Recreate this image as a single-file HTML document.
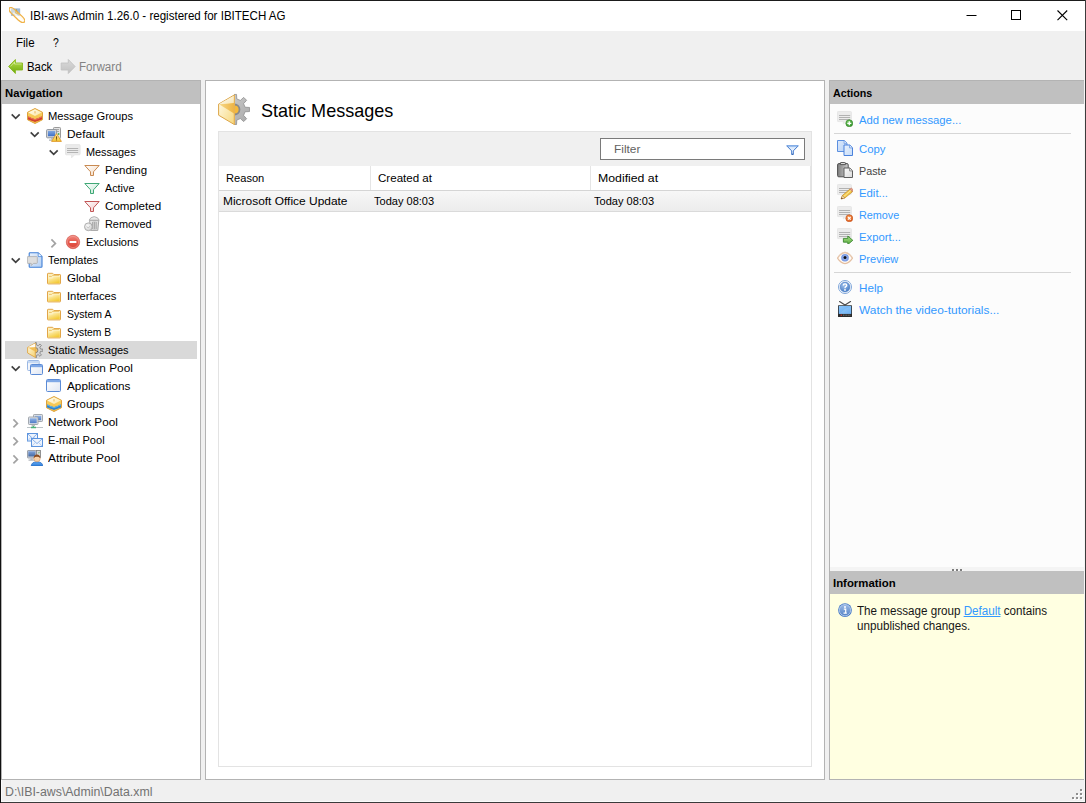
<!DOCTYPE html>
<html><head><meta charset="utf-8"><title>IBI-aws Admin</title>
<style>
html,body{margin:0;padding:0;background:#f0f0f0;}
body{width:1086px;height:803px;position:relative;overflow:hidden;font-family:"Liberation Sans",sans-serif;font-size:12px;}
.b{position:absolute;display:block;}
.t{position:absolute;white-space:pre;transform-origin:0 0;line-height:normal;}
</style></head><body>
<div class="b" style="left:0px;top:0px;width:1086px;height:803px;background:#f0f0f0;"></div>
<div class="b" style="left:0px;top:0px;width:1086px;height:1px;background:#1b1b1b;"></div>
<div class="b" style="left:0px;top:802px;width:1086px;height:1px;background:#3a3a3a;"></div>
<div class="b" style="left:0px;top:0px;width:1px;height:803px;background:#111;"></div>
<div class="b" style="left:1085px;top:0px;width:1px;height:803px;background:#3c3c3c;"></div>
<div class="b" style="left:1084px;top:1px;width:1px;height:801px;background:#f6f6f6;"></div>
<div class="b" style="left:1px;top:31px;width:1px;height:771px;background:#fafafa;"></div>
<div class="b" style="left:1px;top:801px;width:1084px;height:1px;background:#fafafa;"></div>
<div class="b" style="left:1px;top:1px;width:1084px;height:30px;background:#fff;"></div>
<svg class="b" style="left:960px;top:5px" width="120" height="22" viewBox="0 0 120 22"><path d="M6.5 10.5h10" stroke="#000" stroke-width="1" fill="none"/><rect x="51.5" y="5.5" width="9" height="9" fill="none" stroke="#000"/><path d="M97.5 5.5l9.7 9.7M107.2 5.5l-9.7 9.7" stroke="#000" stroke-width="1.1" fill="none"/></svg>
<div class="b" style="left:1px;top:80px;width:200px;height:700px;background:#fff;border:1px solid #b3b3b3;box-sizing:border-box;"></div>
<div class="b" style="left:2px;top:81px;width:198px;height:23px;background:#c0c0c0;"></div>
<div class="b" style="left:5px;top:341px;width:192px;height:18px;background:#d9d9d9;"></div>
<svg class="b" style="left:27px;top:108px" width="16" height="16" viewBox="0 0 16 16"><defs><linearGradient id="g1" x1="0" y1="0" x2="1" y2="1"><stop offset="0" stop-color="#fffef6"/><stop offset="1" stop-color="#fbe6a0"/></linearGradient><linearGradient id="g2" x1="0" y1="0" x2="0" y2="1"><stop offset="0" stop-color="#f9d56a"/><stop offset="1" stop-color="#f3bd45"/></linearGradient></defs><path d="M8 .5L15.5 4.3V11.7L8 15.5L.5 11.7V4.3Z" fill="url(#g2)" stroke="#dda13c" stroke-width="1" stroke-linejoin="round"/><path d="M8 1.2L14.8 4.5L8 8L1.2 4.5Z" fill="url(#g1)"/><path d="M1 8.6L2.8 9L4.4 10L6.2 10.4L8 11.2L9.8 10.4L11.6 10L13.2 9L15 8.6V11.5L13.2 11.9L11.6 12.8L9.8 13.2L8 14L6.2 13.2L4.4 12.8L2.8 11.9L1 11.5Z" fill="#d2402c"/><path d="M1 8.6L2.8 9L4.4 10L6.2 10.4L8 11.2L9.8 10.4L11.6 10L13.2 9L15 8.6V9.6L13.2 10.1L11.6 11L9.8 11.5L8 12.3L6.2 11.5L4.4 11L2.8 10.1L1 9.6Z" fill="#e8705a"/><path d="M8 3.2v2.2" stroke="#e9b04a" stroke-width=".9"/></svg>
<svg class="b" style="left:10px;top:111px" width="11" height="11" viewBox="0 0 11 11"><path d="M1.7 3.3l4 4l4-4" fill="none" stroke="#404040" stroke-width="1.7"/></svg>
<svg class="b" style="left:46px;top:126px" width="16" height="16" viewBox="0 0 16 16"><defs><linearGradient id="g3" x1="0" y1="0" x2="0" y2="1"><stop offset="0" stop-color="#7ea6e0"/><stop offset="1" stop-color="#3f6fc4"/></linearGradient><linearGradient id="g4" x1="0" y1="0" x2="0" y2="1"><stop offset="0" stop-color="#fff4a8"/><stop offset="1" stop-color="#f6c52e"/></linearGradient></defs><rect x="7.5" y="1.5" width="7" height="11" rx=".8" fill="#e4e4e4" stroke="#9a9a9a"/><path d="M9 3.5h4M9 5.5h4" stroke="#a8a8a8"/><circle cx="12.6" cy="8" r=".9" fill="#4caf50"/><rect x=".6" y="3.6" width="10" height="8.2" rx=".8" fill="#d6d9de" stroke="#8e949c"/><rect x="2" y="5" width="7.2" height="5.2" fill="url(#g3)"/><path d="M3 13.6h6.5v1H3z" fill="#9aa0a8"/><path d="M5 12h2.4v1.6H5z" fill="#b8bcc2"/><path d="M10.5 7.6L15.4 15.4H5.6Z" fill="url(#g4)" stroke="#e09a2e" stroke-width=".9" stroke-linejoin="round"/><path d="M10.5 10.3v2.6" stroke="#7a4a10" stroke-width="1.1"/><rect x="9.95" y="13.4" width="1.1" height="1" fill="#7a4a10"/></svg>
<svg class="b" style="left:29px;top:129px" width="11" height="11" viewBox="0 0 11 11"><path d="M1.7 3.3l4 4l4-4" fill="none" stroke="#404040" stroke-width="1.7"/></svg>
<svg class="b" style="left:65px;top:144px" width="16" height="16" viewBox="0 0 16 16"><path d="M1.3 .6h13a.8.8 0 0 1 .8.8v8.6a.8.8 0 0 1-.8.8H9.6L6.6 13.8V10.8H1.3a.8.8 0 0 1-.8-.8V1.4a.8.8 0 0 1 .8-.8z" fill="#ebebeb" stroke="#e2e2e2" stroke-width=".8"/><path d="M2 4.5h11.2M2 6.5h11.2M2 8.5h11.2" stroke="#b4b4b4" stroke-width="1"/></svg>
<svg class="b" style="left:48px;top:147px" width="11" height="11" viewBox="0 0 11 11"><path d="M1.7 3.3l4 4l4-4" fill="none" stroke="#404040" stroke-width="1.7"/></svg>
<svg class="b" style="left:84px;top:162px" width="16" height="16" viewBox="0 0 16 16"><defs><linearGradient id="g5" x1="0" y1="0" x2="1" y2="1"><stop offset="0" stop-color="#ffffff"/><stop offset="1" stop-color="#f3d9c0"/></linearGradient></defs><path d="M.8 3.5H15.2L9.5 9.8V13.5H6.5V9.8Z" fill="url(#g5)" stroke="#c98a52" stroke-width="1" stroke-linejoin="miter"/></svg>
<svg class="b" style="left:84px;top:180px" width="16" height="16" viewBox="0 0 16 16"><defs><linearGradient id="g6" x1="0" y1="0" x2="1" y2="1"><stop offset="0" stop-color="#ffffff"/><stop offset="1" stop-color="#bfe6d2"/></linearGradient></defs><path d="M.8 3.5H15.2L9.5 9.8V13.5H6.5V9.8Z" fill="url(#g6)" stroke="#3fa876" stroke-width="1" stroke-linejoin="miter"/></svg>
<svg class="b" style="left:84px;top:198px" width="16" height="16" viewBox="0 0 16 16"><defs><linearGradient id="g7" x1="0" y1="0" x2="1" y2="1"><stop offset="0" stop-color="#ffffff"/><stop offset="1" stop-color="#f0c4c4"/></linearGradient></defs><path d="M.8 3.5H15.2L9.5 9.8V13.5H6.5V9.8Z" fill="url(#g7)" stroke="#c25656" stroke-width="1" stroke-linejoin="miter"/></svg>
<svg class="b" style="left:84px;top:216px" width="16" height="16" viewBox="0 0 16 16"><defs><linearGradient id="g8" x1="0" y1="0" x2="1" y2="0"><stop offset="0" stop-color="#f2f2f2"/><stop offset="0.5" stop-color="#cfcfcf"/><stop offset="1" stop-color="#e6e6e6"/></linearGradient><radialGradient id="g9" cx="0.4" cy="0.4" r="0.7"><stop offset="0" stop-color="#fafafa"/><stop offset="1" stop-color="#cdcdcd"/></radialGradient></defs><path d="M5.6 4.3L6.6 14.4h7.2l1-10.1z" fill="url(#g8)" stroke="#9c9c9c" stroke-width=".9"/><path d="M5.2 4.2Q6 1.2 10.2.6Q14.4 1.2 15.2 4.2z" fill="#e8e8e8" stroke="#a6a6a6" stroke-width=".8"/><path d="M8.6 6v7M10.4 6v7M12.2 6v7" stroke="#a2a2a2" stroke-width=".9"/><circle cx="4.4" cy="10.8" r="3.9" fill="url(#g9)" stroke="#a8a8a8" stroke-width=".9"/><path d="M2.6 10.6l1.6 1.2l1.8-1.4" fill="none" stroke="#b5b5b5" stroke-width=".8"/></svg>
<svg class="b" style="left:65px;top:234px" width="16" height="16" viewBox="0 0 16 16"><defs><linearGradient id="g10" x1="0" y1="0" x2="0" y2="1"><stop offset="0" stop-color="#f28b82"/><stop offset="0.5" stop-color="#e4564a"/><stop offset="1" stop-color="#dc4336"/></linearGradient></defs><circle cx="8" cy="8" r="6.7" fill="url(#g10)" stroke="#d96a60" stroke-width=".8"/><circle cx="8" cy="8" r="5.6" fill="none" stroke="#f3a49c" stroke-width=".7" opacity=".8"/><rect x="4.6" y="6.9" width="6.8" height="2.2" rx=".4" fill="#fff"/></svg>
<svg class="b" style="left:48px;top:238px" width="11" height="11" viewBox="0 0 11 11"><path d="M3.4 1.4l4 4l-4 4" fill="none" stroke="#a3a3a3" stroke-width="1.7"/></svg>
<svg class="b" style="left:27px;top:252px" width="16" height="16" viewBox="0 0 16 16"><defs><linearGradient id="g11" x1="0" y1="0" x2="1" y2="1"><stop offset="0" stop-color="#e8f1fd"/><stop offset="1" stop-color="#b5d0f3"/></linearGradient></defs><path d="M3 .8h8.2L15 4.6V14.4a.8.8 0 0 1-.8.8H3a.8.8 0 0 1-.8-.8V1.6A.8.8 0 0 1 3 .8z" fill="url(#g11)" stroke="#3f7fd6" stroke-width="1.1"/><path d="M11.2 1v3.6H15" fill="#f4f8fe" stroke="#4a86d8" stroke-width=".8"/><path d="M1 4.6h8.6a.7.7 0 0 1 .7.7v5.4a.7.7 0 0 1-.7.7H6.4L4.2 13.6V11.4H1a.7.7 0 0 1-.7-.7V5.3A.7.7 0 0 1 1 4.6z" fill="#dedede" stroke="#ababab" stroke-width=".8"/></svg>
<svg class="b" style="left:10px;top:255px" width="11" height="11" viewBox="0 0 11 11"><path d="M1.7 3.3l4 4l4-4" fill="none" stroke="#404040" stroke-width="1.7"/></svg>
<svg class="b" style="left:46px;top:270px" width="16" height="16" viewBox="0 0 16 16"><defs><linearGradient id="g12" x1="0" y1="0" x2="0.6" y2="1"><stop offset="0" stop-color="#fff6cf"/><stop offset="1" stop-color="#f4cb3a"/></linearGradient></defs><path d="M1.5 3.9a.6.6 0 0 1 .6-.6h4.6l1.2 1.2h6a.6.6 0 0 1 .6.6v8.2a.6.6 0 0 1-.6.6H2.1a.6.6 0 0 1-.6-.6z" fill="#fdf0bf" stroke="#e2a548" stroke-width="1"/><path d="M2.2 8.4h4.2l1.4-1.7h6v6.5H2.2z" fill="url(#g12)"/><path d="M3 6.4h2.6l1-1h6.6" fill="none" stroke="#ecc468" stroke-width="1"/></svg>
<svg class="b" style="left:46px;top:288px" width="16" height="16" viewBox="0 0 16 16"><defs><linearGradient id="g13" x1="0" y1="0" x2="0.6" y2="1"><stop offset="0" stop-color="#fff6cf"/><stop offset="1" stop-color="#f4cb3a"/></linearGradient></defs><path d="M1.5 3.9a.6.6 0 0 1 .6-.6h4.6l1.2 1.2h6a.6.6 0 0 1 .6.6v8.2a.6.6 0 0 1-.6.6H2.1a.6.6 0 0 1-.6-.6z" fill="#fdf0bf" stroke="#e2a548" stroke-width="1"/><path d="M2.2 8.4h4.2l1.4-1.7h6v6.5H2.2z" fill="url(#g13)"/><path d="M3 6.4h2.6l1-1h6.6" fill="none" stroke="#ecc468" stroke-width="1"/></svg>
<svg class="b" style="left:46px;top:306px" width="16" height="16" viewBox="0 0 16 16"><defs><linearGradient id="g14" x1="0" y1="0" x2="0.6" y2="1"><stop offset="0" stop-color="#fff6cf"/><stop offset="1" stop-color="#f4cb3a"/></linearGradient></defs><path d="M1.5 3.9a.6.6 0 0 1 .6-.6h4.6l1.2 1.2h6a.6.6 0 0 1 .6.6v8.2a.6.6 0 0 1-.6.6H2.1a.6.6 0 0 1-.6-.6z" fill="#fdf0bf" stroke="#e2a548" stroke-width="1"/><path d="M2.2 8.4h4.2l1.4-1.7h6v6.5H2.2z" fill="url(#g14)"/><path d="M3 6.4h2.6l1-1h6.6" fill="none" stroke="#ecc468" stroke-width="1"/></svg>
<svg class="b" style="left:46px;top:324px" width="16" height="16" viewBox="0 0 16 16"><defs><linearGradient id="g15" x1="0" y1="0" x2="0.6" y2="1"><stop offset="0" stop-color="#fff6cf"/><stop offset="1" stop-color="#f4cb3a"/></linearGradient></defs><path d="M1.5 3.9a.6.6 0 0 1 .6-.6h4.6l1.2 1.2h6a.6.6 0 0 1 .6.6v8.2a.6.6 0 0 1-.6.6H2.1a.6.6 0 0 1-.6-.6z" fill="#fdf0bf" stroke="#e2a548" stroke-width="1"/><path d="M2.2 8.4h4.2l1.4-1.7h6v6.5H2.2z" fill="url(#g15)"/><path d="M3 6.4h2.6l1-1h6.6" fill="none" stroke="#ecc468" stroke-width="1"/></svg>
<svg class="b" style="left:27px;top:342px" width="16" height="16" viewBox="0 0 16 16"><defs><linearGradient id="g16" x1="0" y1="0" x2="1" y2="1"><stop offset="0" stop-color="#fff8e0"/><stop offset="1" stop-color="#f6d372"/></linearGradient><clipPath id="cg16"><rect x="8" y="0" width="8" height="16"/></clipPath></defs><g clip-path="url(#cg16)"><path d="M13.58 7.07L15.93 7.16L15.93 9.24L13.58 9.33L12.83 11.13L14.43 12.86L12.96 14.33L11.23 12.73L9.43 13.48L9.34 15.83L7.26 15.83L7.17 13.48L5.37 12.73L3.64 14.33L2.17 12.86L3.77 11.13L3.02 9.33L0.67 9.24L0.67 7.16L3.02 7.07L3.77 5.27L2.17 3.54L3.64 2.07L5.37 3.67L7.17 2.92L7.26 0.57L9.34 0.57L9.43 2.92L11.23 3.67L12.96 2.07L14.43 3.54L12.83 5.27Z" fill="#d2d2d2" stroke="#7c7c7c" stroke-width=".8"/><circle cx="8.3" cy="8.2" r="2.6" fill="#f0c060" stroke="#7f7f7f" stroke-width=".9"/></g><path d="M.6 5.4L8.3 1V15.4L.6 11Z" fill="url(#g16)" stroke="#dfa645" stroke-width=".9" stroke-linejoin="round"/><path d="M.9 5.5L8.1 5.2V9.6Z" fill="#f2be55"/><path d="M.9 5.3L8.1 1.4V5Z" fill="#fffaf0"/></svg>
<svg class="b" style="left:27px;top:360px" width="16" height="16" viewBox="0 0 16 16"><defs><linearGradient id="g17" x1="0" y1="0" x2="1" y2="1"><stop offset="0" stop-color="#ffffff"/><stop offset="1" stop-color="#dfe6f3"/></linearGradient></defs><rect x="0.5" y="0.5" width="11.6" height="10" rx="1" fill="url(#g17)" stroke="#9bb8e4"/><rect x="1" y="1" width="10.6" height="2.2" fill="#c6d9f3"/><defs><linearGradient id="g18" x1="0" y1="0" x2="1" y2="1"><stop offset="0" stop-color="#ffffff"/><stop offset="1" stop-color="#dfe6f3"/></linearGradient></defs><rect x="3.5" y="4.5" width="12" height="10" rx="1" fill="url(#g18)" stroke="#5b8bd6"/><rect x="4" y="5" width="11" height="2.2" fill="#7fa8e6"/></svg>
<svg class="b" style="left:10px;top:363px" width="11" height="11" viewBox="0 0 11 11"><path d="M1.7 3.3l4 4l4-4" fill="none" stroke="#404040" stroke-width="1.7"/></svg>
<svg class="b" style="left:46px;top:378px" width="16" height="16" viewBox="0 0 16 16"><defs><linearGradient id="g19" x1="0" y1="0" x2="1" y2="1"><stop offset="0" stop-color="#ffffff"/><stop offset="1" stop-color="#dfe6f3"/></linearGradient></defs><rect x="0.5" y="1.5" width="14" height="12" rx="1" fill="url(#g19)" stroke="#5b8bd6"/><rect x="1" y="2" width="13" height="2.2" fill="#7fa8e6"/></svg>
<svg class="b" style="left:46px;top:396px" width="16" height="16" viewBox="0 0 16 16"><defs><linearGradient id="g20" x1="0" y1="0" x2="1" y2="1"><stop offset="0" stop-color="#fffef6"/><stop offset="1" stop-color="#fbe6a0"/></linearGradient><linearGradient id="g21" x1="0" y1="0" x2="0" y2="1"><stop offset="0" stop-color="#f9d56a"/><stop offset="1" stop-color="#f3bd45"/></linearGradient></defs><path d="M8 .5L15.5 4.3V11.7L8 15.5L.5 11.7V4.3Z" fill="url(#g21)" stroke="#dda13c" stroke-width="1" stroke-linejoin="round"/><path d="M8 1.2L14.8 4.5L8 8L1.2 4.5Z" fill="url(#g20)"/><path d="M1 8.6L2.8 9L4.4 10L6.2 10.4L8 11.2L9.8 10.4L11.6 10L13.2 9L15 8.6V11.5L13.2 11.9L11.6 12.8L9.8 13.2L8 14L6.2 13.2L4.4 12.8L2.8 11.9L1 11.5Z" fill="#2f86cf"/><path d="M1 8.6L2.8 9L4.4 10L6.2 10.4L8 11.2L9.8 10.4L11.6 10L13.2 9L15 8.6V9.6L13.2 10.1L11.6 11L9.8 11.5L8 12.3L6.2 11.5L4.4 11L2.8 10.1L1 9.6Z" fill="#63b3ea"/><path d="M8 3.2v2.2" stroke="#e9b04a" stroke-width=".9"/></svg>
<svg class="b" style="left:27px;top:414px" width="16" height="16" viewBox="0 0 16 16"><defs><linearGradient id="g22" x1="0" y1="0" x2="0" y2="1"><stop offset="0" stop-color="#8fb2e6"/><stop offset="1" stop-color="#4f7cc6"/></linearGradient></defs><rect x="6.5" y="0.5" width="9" height="7" rx=".7" fill="#e3e5e8" stroke="#9aa0a8" stroke-width=".9"/><rect x="7.8" y="1.8" width="6.4" height="4.4" fill="url(#g22)"/><rect x="1.5" y="3.0" width="9.5" height="7.5" rx=".7" fill="#e3e5e8" stroke="#9aa0a8" stroke-width=".9"/><rect x="2.8" y="4.3" width="6.9" height="4.9" fill="url(#g22)"/><path d="M4.6 11h3.4v1.2H4.6z" fill="#b9bdc3"/><path d="M0 13.5h16" stroke="#bcc4c8" stroke-width="1"/><path d="M6.3 12v1.5M4 13.5h5" stroke="#4bb37a" stroke-width="1.3"/></svg>
<svg class="b" style="left:10px;top:418px" width="11" height="11" viewBox="0 0 11 11"><path d="M3.4 1.4l4 4l-4 4" fill="none" stroke="#a3a3a3" stroke-width="1.7"/></svg>
<svg class="b" style="left:27px;top:432px" width="16" height="16" viewBox="0 0 16 16"><rect x="0.5" y="1.5" width="10" height="7.5" fill="#eef4fd" stroke="#5d94de" stroke-width="1"/><path d="M1 2L5.5 6.27L10 2" fill="none" stroke="#7aa8e6" stroke-width=".9"/><path d="M1 8.5L3.96 5.25M10 8.5L7.04 5.25" fill="none" stroke="#a9c6ef" stroke-width=".8"/><rect x="4.5" y="6.5" width="11" height="8" fill="#eef4fd" stroke="#5d94de" stroke-width="1"/><path d="M5 7L10.0 11.58L15 7" fill="none" stroke="#7aa8e6" stroke-width=".9"/><path d="M5 14L8.32 10.5M15 14L11.68 10.5" fill="none" stroke="#a9c6ef" stroke-width=".8"/></svg>
<svg class="b" style="left:10px;top:436px" width="11" height="11" viewBox="0 0 11 11"><path d="M3.4 1.4l4 4l-4 4" fill="none" stroke="#a3a3a3" stroke-width="1.7"/></svg>
<svg class="b" style="left:27px;top:450px" width="16" height="16" viewBox="0 0 16 16"><defs><linearGradient id="g23" x1="0" y1="0" x2="0" y2="1"><stop offset="0" stop-color="#7ea2dc"/><stop offset="1" stop-color="#44689f"/></linearGradient><linearGradient id="g24" x1="0" y1="0" x2="0" y2="1"><stop offset="0" stop-color="#62a8f2"/><stop offset="1" stop-color="#2f7fd9"/></linearGradient></defs><rect x="9.5" y=".5" width="4" height="7" fill="#d8d8d8" stroke="#7d7d7d" stroke-width=".8"/><rect x=".5" y=".5" width="8.5" height="7.5" rx=".5" fill="#d4d8de" stroke="#8a9099" stroke-width=".8"/><rect x="1.3" y="1.3" width="7" height="5.2" fill="url(#g23)"/><path d="M1.5 9.6h6v1.2h-6zM3.4 8.2h2.4v1.4H3.4z" fill="#b4b8be"/><path d="M11 3.2l1.4-1.6v1.6z" fill="#3daa4c"/><path d="M4.2 16Q4.6 11.8 10 11.8Q15.4 11.8 15.8 16z" fill="url(#g24)" stroke="#2a6cc0" stroke-width=".7"/><circle cx="10" cy="8.6" r="3.2" fill="#f8cfa4" stroke="#c98c58" stroke-width=".5"/><path d="M6.7 8.2Q6.9 4.6 10 4.6Q13.1 4.6 13.3 8.2Q11.8 6.6 10 6.8Q8.2 6.6 6.7 8.2z" fill="#8a4b20"/></svg>
<svg class="b" style="left:10px;top:454px" width="11" height="11" viewBox="0 0 11 11"><path d="M3.4 1.4l4 4l-4 4" fill="none" stroke="#a3a3a3" stroke-width="1.7"/></svg>
<div class="b" style="left:205px;top:80px;width:620px;height:700px;background:#fff;border:1px solid #b3b3b3;box-sizing:border-box;"></div>
<div class="b" style="left:218px;top:131px;width:594px;height:636px;background:#fff;border:1px solid #e3e3e3;box-sizing:border-box;"></div>
<div class="b" style="left:219px;top:132px;width:592px;height:34px;background:#f0f0f0;"></div>
<div class="b" style="left:600px;top:138px;width:205px;height:22px;background:#fff;border:1px solid #7a7a7a;box-sizing:border-box;"></div>
<div class="b" style="left:219px;top:166px;width:592px;height:24px;background:#fff;"></div>
<div class="b" style="left:370px;top:166px;width:1px;height:24px;background:#e5e5e5;"></div>
<div class="b" style="left:590px;top:166px;width:1px;height:24px;background:#e5e5e5;"></div>
<div class="b" style="left:810px;top:166px;width:1px;height:24px;background:#e5e5e5;"></div>
<div class="b" style="left:219px;top:190px;width:592px;height:1px;background:#d5d5d5;"></div>
<div class="b" style="left:219px;top:191px;width:592px;height:20px;background:linear-gradient(#f7f7f7,#ececec);"></div>
<div class="b" style="left:219px;top:211px;width:592px;height:1px;background:#dadada;"></div>
<div class="b" style="left:829px;top:80px;width:255px;height:700px;background:#fcfcfc;border:1px solid #b3b3b3;border-right:0;box-sizing:border-box;"></div>
<div class="b" style="left:830px;top:81px;width:254px;height:23px;background:#c0c0c0;"></div>
<svg class="b" style="left:837px;top:111px" width="16" height="16" viewBox="0 0 16 16"><defs><radialGradient id="g25" cx="0.4" cy="0.35" r="0.7"><stop offset="0" stop-color="#7ed06a"/><stop offset="1" stop-color="#2f8f2a"/></radialGradient></defs><path d="M1.2 .5h12.4a.8.8 0 0 1 .8.8v8.5a.8.8 0 0 1-.8.8H9L6.4 12.8V10.6H1.2a.8.8 0 0 1-.8-.8V1.3a.8.8 0 0 1 .8-.8z" fill="#ececec" stroke="#e3e3e3" stroke-width=".8"/><path d="M2 4.5h11.2M2 6.5h11.2M2 8.5h11.2" stroke="#b2b2b2" stroke-width="1"/><circle cx="12.3" cy="12.3" r="3.5" fill="url(#g25)" stroke="#3c8a2e" stroke-width=".6"/><path d="M12.3 10.3v4M10.3 12.3h4" stroke="#fff" stroke-width="1.3"/></svg>
<svg class="b" style="left:837px;top:140px" width="16" height="16" viewBox="0 0 16 16"><defs><linearGradient id="g26" x1="0" y1="0" x2="1" y2="1"><stop offset="0" stop-color="#dbe8fb"/><stop offset="1" stop-color="#b9d3f6"/></linearGradient></defs><path d="M0.5 0.5H7.3L10.0 3.2V11.5H0.5Z" fill="url(#g26)" stroke="#5b8fe0" stroke-width="1" stroke-linejoin="round"/><path d="M7.1 0.7V3.4H9.8" fill="#fff" fill-opacity=".7" stroke="#5b8fe0" stroke-width=".7"/><defs><linearGradient id="g27" x1="0" y1="0" x2="1" y2="1"><stop offset="0" stop-color="#eaf2fd"/><stop offset="1" stop-color="#c6dcf8"/></linearGradient></defs><path d="M7.0 5.0H12.8L15.5 7.7V15.5H7.0Z" fill="url(#g27)" stroke="#4a82dc" stroke-width="1" stroke-linejoin="round"/><path d="M12.6 5.2V7.9H15.3" fill="#fff" fill-opacity=".7" stroke="#4a82dc" stroke-width=".7"/></svg>
<svg class="b" style="left:837px;top:162px" width="16" height="16" viewBox="0 0 16 16"><defs><linearGradient id="g28" x1="0" y1="0" x2="1" y2="0"><stop offset="0" stop-color="#7f7f7f"/><stop offset="1" stop-color="#cdcdcd"/></linearGradient></defs><rect x=".6" y="1.6" width="10.6" height="13.2" rx="1.2" fill="url(#g28)" stroke="#4e4e4e" stroke-width="1"/><path d="M3.4 2.6V1.1a.6.6 0 0 1 .6-.6h3.8a.6.6 0 0 1 .6.6v1.5z" fill="#dcdcdc" stroke="#4e4e4e" stroke-width=".9"/><defs><linearGradient id="g29" x1="0" y1="0" x2="1" y2="1"><stop offset="0" stop-color="#fbfbfb"/><stop offset="1" stop-color="#dadada"/></linearGradient></defs><path d="M7.0 6.0H12.8L15.5 8.7V15.5H7.0Z" fill="url(#g29)" stroke="#5e5e5e" stroke-width="1" stroke-linejoin="round"/><path d="M12.6 6.2V8.9H15.3" fill="#fff" fill-opacity=".7" stroke="#5e5e5e" stroke-width=".7"/></svg>
<svg class="b" style="left:837px;top:184px" width="16" height="16" viewBox="0 0 16 16"><path d="M1.2 .5h12.4a.8.8 0 0 1 .8.8v8.5a.8.8 0 0 1-.8.8H9L6.4 12.8V10.6H1.2a.8.8 0 0 1-.8-.8V1.3a.8.8 0 0 1 .8-.8z" fill="#ececec" stroke="#e3e3e3" stroke-width=".8"/><path d="M2 4.5h11.2M2 6.5h11.2M2 8.5h11.2" stroke="#b2b2b2" stroke-width="1"/><path d="M4.2 14.9l1.2-3.4L12.8 5.2l2.6 2.6L7.8 14z" fill="#f3c94c" stroke="#c58a1e" stroke-width=".7" stroke-linejoin="round"/><path d="M12.8 5.2l.9-.8a.9.9 0 0 1 1.2 0l1 1.1a.9.9 0 0 1 0 1.2l-.5 .9z" fill="#e9a28e" stroke="#b86a50" stroke-width=".6"/><path d="M6.6 12.6L13.9 6.4" stroke="#fbe9a0" stroke-width=".9"/><path d="M4.2 14.9l1.2-3.4l2.4 2.5z" fill="#f8e6c4" stroke="#a06a2a" stroke-width=".5"/><path d="M4.2 14.9l.5-1.5l1.1 1z" fill="#4a2c12"/></svg>
<svg class="b" style="left:837px;top:206px" width="16" height="16" viewBox="0 0 16 16"><defs><radialGradient id="g30" cx="0.4" cy="0.35" r="0.7"><stop offset="0" stop-color="#f59a52"/><stop offset="1" stop-color="#dc5a1e"/></radialGradient></defs><path d="M1.2 .5h12.4a.8.8 0 0 1 .8.8v8.5a.8.8 0 0 1-.8.8H9L6.4 12.8V10.6H1.2a.8.8 0 0 1-.8-.8V1.3a.8.8 0 0 1 .8-.8z" fill="#ececec" stroke="#e3e3e3" stroke-width=".8"/><path d="M2 4.5h11.2M2 6.5h11.2M2 8.5h11.2" stroke="#b2b2b2" stroke-width="1"/><circle cx="12.3" cy="12.3" r="3.5" fill="url(#g30)" stroke="#c8571f" stroke-width=".6"/><path d="M10.9 10.9l2.8 2.8M13.7 10.9l-2.8 2.8" stroke="#fff" stroke-width="1.1"/></svg>
<svg class="b" style="left:837px;top:228px" width="16" height="16" viewBox="0 0 16 16"><defs><linearGradient id="g31" x1="0" y1="0" x2="0" y2="1"><stop offset="0" stop-color="#a8de88"/><stop offset="1" stop-color="#58ac3c"/></linearGradient></defs><path d="M1.2 .5h12.4a.8.8 0 0 1 .8.8v8.5a.8.8 0 0 1-.8.8H9L6.4 12.8V10.6H1.2a.8.8 0 0 1-.8-.8V1.3a.8.8 0 0 1 .8-.8z" fill="#ececec" stroke="#e3e3e3" stroke-width=".8"/><path d="M2 4.5h11.2M2 6.5h11.2M2 8.5h11.2" stroke="#b2b2b2" stroke-width="1"/><path d="M6.4 10.4h4.4V8l5 4.3l-5 4.3v-2.4H6.4z" fill="url(#g31)" stroke="#2f7d24" stroke-width=".8" stroke-linejoin="round"/></svg>
<svg class="b" style="left:837px;top:250px" width="16" height="16" viewBox="0 0 16 16"><defs><radialGradient id="g32" cx="0.5" cy="0.5" r="0.6"><stop offset="0" stop-color="#b4c8f6"/><stop offset="1" stop-color="#5f86dc"/></radialGradient></defs><path d="M.5 8.2Q4 2.6 8 2.6Q12 2.6 15.5 8.2Q12 13.6 8 13.6Q4 13.6 .5 8.2z" fill="#fffaf4" stroke="#e4bfa2" stroke-width="1.2"/><circle cx="8" cy="7.8" r="3.8" fill="url(#g32)"/><circle cx="8" cy="7.4" r="1.5" fill="#0c0f18"/><path d="M1.2 6.6Q4.6 2 8 2Q11.4 2 14.8 6.6" fill="none" stroke="#e8cdb6" stroke-width=".8"/></svg>
<svg class="b" style="left:837px;top:279px" width="16" height="16" viewBox="0 0 16 16"><defs><radialGradient id="g33" cx="0.4" cy="0.3" r="0.8"><stop offset="0" stop-color="#a4c4ee"/><stop offset="1" stop-color="#3d74c0"/></radialGradient></defs><circle cx="8" cy="8" r="6.5" fill="#fff" stroke="#7fa6da" stroke-width="1"/><circle cx="8" cy="8" r="4.9" fill="url(#g33)" stroke="#4a7ec6" stroke-width=".6"/><path d="M6.3 6.6Q6.3 4.9 8 4.9Q9.7 4.9 9.7 6.3Q9.7 7.2 8.8 7.7Q8 8.2 8 9.2" fill="none" stroke="#fff" stroke-width="1.4"/><circle cx="8" cy="10.9" r=".9" fill="#fff"/></svg>
<svg class="b" style="left:837px;top:301px" width="16" height="16" viewBox="0 0 16 16"><defs><linearGradient id="g34" x1="0" y1="0" x2="1" y2="1"><stop offset="0" stop-color="#8cc6fb"/><stop offset="1" stop-color="#5aa6f0"/></linearGradient></defs><path d="M2.2 .2L8 4L13.9 .2" fill="none" stroke="#4a4a4a" stroke-width="1.1"/><rect x="1" y="4.2" width="14" height="11.8" rx=".6" fill="#2c2c2c"/><rect x="1.8" y="4.9" width="12.4" height="8" fill="url(#g34)"/><path d="M1.8 12.9L8 8L14.2 4.9V12.9z" fill="#fff" fill-opacity=".12"/><rect x="3.6" y="13.6" width="1.4" height="1.1" fill="#e0332a"/><path d="M6 14.2h1M7.6 14.2h1M9.2 14.2h1M10.8 14.2h1M12.4 14.2h1" stroke="#8a8a8a" stroke-width=".8"/></svg>
<div class="b" style="left:834px;top:133px;width:237px;height:1px;background:#d6d6d6;"></div>
<div class="b" style="left:834px;top:272px;width:237px;height:1px;background:#d6d6d6;"></div>
<div class="b" style="left:830px;top:567px;width:254px;height:4px;background:#f4f4f4;"></div>
<div class="b" style="left:953px;top:570px;width:2px;height:2px;background:#fff;"></div>
<div class="b" style="left:952px;top:569px;width:2px;height:2px;background:#7d7d7d;"></div>
<div class="b" style="left:957px;top:570px;width:2px;height:2px;background:#fff;"></div>
<div class="b" style="left:956px;top:569px;width:2px;height:2px;background:#7d7d7d;"></div>
<div class="b" style="left:961px;top:570px;width:2px;height:2px;background:#fff;"></div>
<div class="b" style="left:960px;top:569px;width:2px;height:2px;background:#7d7d7d;"></div>
<div class="b" style="left:830px;top:571px;width:254px;height:23px;background:#c0c0c0;"></div>
<div class="b" style="left:830px;top:594px;width:254px;height:185px;background:#ffffe1;"></div>
<svg class="b" style="left:837px;top:602px" width="16" height="16" viewBox="0 0 16 16"><defs><linearGradient id="g35" x1="0" y1="0" x2="0" y2="1"><stop offset="0" stop-color="#9dbbe6"/><stop offset="1" stop-color="#5583c6"/></linearGradient></defs><circle cx="8" cy="8.1" r="6.9" fill="#4478c6"/><circle cx="8" cy="8.1" r="5.7" fill="url(#g35)" stroke="#c9dbf3" stroke-width=".7"/><circle cx="8" cy="4.9" r="1" fill="#fff"/><path d="M6.8 7.1h1.9v3.9M6.5 11.2h3.3" stroke="#fff" stroke-width="1.2" fill="none"/></svg>
<svg class="b" style="left:786px;top:145px" width="14" height="10" viewBox="0 0 14 10"><defs><linearGradient id="g36" x1="0" y1="0" x2="0" y2="1"><stop offset="0" stop-color="#cfe2fa"/><stop offset="1" stop-color="#ffffff"/></linearGradient></defs><path d="M.7 .8H12.3L7.3 5.9V9.3H5.7V5.9Z" fill="url(#g36)" stroke="#4179cc" stroke-width="1" stroke-linejoin="round"/><path d="M1.4 .9H11.6" stroke="#8db6ee" stroke-width="1.1"/><path d="M5.6 9.3h1.8" stroke="#2f62b4" stroke-width="1"/></svg>
<svg class="b" style="left:218px;top:93px" width="32" height="32" viewBox="0 0 32 32"><defs><linearGradient id="g37" x1="0" y1="0" x2="1" y2="1"><stop offset="0" stop-color="#fffdf2"/><stop offset="1" stop-color="#f7d77a"/></linearGradient><linearGradient id="g38" x1="0" y1="0" x2="1" y2="0"><stop offset="0" stop-color="#f7d98a"/><stop offset="1" stop-color="#eeb444"/></linearGradient><linearGradient id="g39" x1="0" y1="0" x2="1" y2="1"><stop offset="0" stop-color="#fffefa"/><stop offset="1" stop-color="#f6e3b0"/></linearGradient><linearGradient id="g40" x1="0" y1="0" x2="1" y2="1"><stop offset="0" stop-color="#d2d2d2"/><stop offset="1" stop-color="#a8a8a8"/></linearGradient><clipPath id="cg32"><rect x="16" y="0" width="16" height="32"/></clipPath></defs><g clip-path="url(#cg32)"><path d="M27.06 14.24L31.56 14.45L31.56 18.55L27.06 18.76L25.57 22.37L28.60 25.70L25.70 28.60L22.37 25.57L18.76 27.06L18.55 31.56L14.45 31.56L14.24 27.06L10.63 25.57L7.30 28.60L4.40 25.70L7.43 22.37L5.94 18.76L1.44 18.55L1.44 14.45L5.94 14.24L7.43 10.63L4.40 7.30L7.30 4.40L10.63 7.43L14.24 5.94L14.45 1.44L18.55 1.44L18.76 5.94L22.37 7.43L25.70 4.40L28.60 7.30L25.57 10.63Z" fill="url(#g40)" stroke="#8e8e8e" stroke-width=".8" stroke-linejoin="round"/><circle cx="16.5" cy="16.5" r="5" fill="#f5b93a" stroke="#8a8a8a" stroke-width="1.8"/></g><path d="M.6 11.1L16.4 1.9V31.6L.6 22.2Z" fill="url(#g37)" stroke="#dca548" stroke-width="1" stroke-linejoin="round"/><path d="M1.1 11.2L16 10V20.6Z" fill="url(#g38)"/><path d="M1.1 11L16 2.8V9.7Z" fill="url(#g39)"/><path d="M16.3 2.2V31.3" stroke="#e9b75a" stroke-width=".9"/></svg>
<svg class="b" style="left:9px;top:7px" width="16" height="16" viewBox="0 0 16 16"><rect x="2.2" y="1.8" width="8.7" height="6.8" fill="#9dbbdb" stroke="#8fb0d4" stroke-width=".5"/><path d="M5.2 7.8L7.3 3.4L9.4 7.8M6 6.4h2.6" fill="none" stroke="#b08a22" stroke-width="1.1"/><path d="M.5 1C1.5 0 3.8 .8 6.2 3L13.4 9.6C15.8 12 16.4 14 15.4 15C14.4 16 11.8 15.4 9.2 13L2.4 6.4C.2 4.2-.3 2 .5 1z" fill="#fff6e0" fill-opacity=".5" stroke="#f0b248" stroke-width="1.3"/><path d="M4.4 5.6L12.2 12.8Q13.6 13.8 14.2 13.2" fill="none" stroke="#fff" stroke-width="1.6" opacity=".75"/></svg>
<svg class="b" style="left:7.5px;top:59px" width="16" height="16" viewBox="0 0 16 16"><defs><linearGradient id="g41" x1="0" y1="0" x2="0" y2="1"><stop offset="0" stop-color="#bfe24a"/><stop offset="1" stop-color="#6aa80f"/></linearGradient></defs><path d="M.6 7.5L7.4 .5V4H14.5V11H7.4V14.5Z" fill="url(#g41)" stroke="#86b81c" stroke-width=".9" stroke-linejoin="round"/><path d="M2.4 7.5L6.5 3.2V5H13.5" fill="none" stroke="#fff" stroke-opacity=".45" stroke-width=".9"/></svg>
<svg class="b" style="left:59.5px;top:59px" width="16" height="16" viewBox="0 0 16 16"><defs><linearGradient id="g42" x1="0" y1="0" x2="0" y2="1"><stop offset="0" stop-color="#dadada"/><stop offset="1" stop-color="#c0c0c0"/></linearGradient></defs><path d="M15.1 7.5L8.3 .5V4H1.2V11H8.3V14.5Z" fill="url(#g42)" stroke="#c2c2c2" stroke-width=".9" stroke-linejoin="round"/></svg>
<div class="b" style="left:1081px;top:790px;width:2px;height:2px;background:#fff;"></div>
<div class="b" style="left:1080px;top:789px;width:2px;height:2px;background:#8f8f8f;"></div>
<div class="b" style="left:1077px;top:794px;width:2px;height:2px;background:#fff;"></div>
<div class="b" style="left:1076px;top:793px;width:2px;height:2px;background:#8f8f8f;"></div>
<div class="b" style="left:1081px;top:794px;width:2px;height:2px;background:#fff;"></div>
<div class="b" style="left:1080px;top:793px;width:2px;height:2px;background:#8f8f8f;"></div>
<div class="b" style="left:1073px;top:798px;width:2px;height:2px;background:#fff;"></div>
<div class="b" style="left:1072px;top:797px;width:2px;height:2px;background:#8f8f8f;"></div>
<div class="b" style="left:1077px;top:798px;width:2px;height:2px;background:#fff;"></div>
<div class="b" style="left:1076px;top:797px;width:2px;height:2px;background:#8f8f8f;"></div>
<div class="b" style="left:1081px;top:798px;width:2px;height:2px;background:#fff;"></div>
<div class="b" style="left:1080px;top:797px;width:2px;height:2px;background:#8f8f8f;"></div>
<span class="t" style="left:29.6px;top:9px;font-size:12px;color:#000;transform:scaleX(0.9626);">IBI-aws Admin 1.26.0 - registered for IBITECH AG</span>
<span class="t" style="left:16px;top:36px;font-size:12px;color:#000;transform:scaleX(0.9616);">File</span>
<span class="t" style="left:52.6px;top:36px;font-size:12px;color:#000;transform:scaleX(0.8673);">?</span>
<span class="t" style="left:26.5px;top:60px;font-size:12px;color:#000;transform:scaleX(0.9480);">Back</span>
<span class="t" style="left:79px;top:60px;font-size:12px;color:#838383;transform:scaleX(0.9701);">Forward</span>
<span class="t" style="left:4.9px;top:87px;font-size:11px;color:#000;font-weight:bold;transform:scaleX(1.0243);">Navigation</span>
<span class="t" style="left:47.7px;top:110px;font-size:11px;color:#000;transform:scaleX(1.0159);">Message Groups</span>
<span class="t" style="left:66.7px;top:128px;font-size:11px;color:#000;transform:scaleX(1.0786);">Default</span>
<span class="t" style="left:85.7px;top:146px;font-size:11px;color:#000;transform:scaleX(0.9892);">Messages</span>
<span class="t" style="left:104.7px;top:164px;font-size:11px;color:#000;transform:scaleX(1.0427);">Pending</span>
<span class="t" style="left:104.7px;top:182px;font-size:11px;color:#000;transform:scaleX(0.9810);">Active</span>
<span class="t" style="left:104.7px;top:200px;font-size:11px;color:#000;transform:scaleX(1.0563);">Completed</span>
<span class="t" style="left:104.7px;top:218px;font-size:11px;color:#000;transform:scaleX(0.9898);">Removed</span>
<span class="t" style="left:85.7px;top:236px;font-size:11px;color:#000;transform:scaleX(1.0004);">Exclusions</span>
<span class="t" style="left:47.7px;top:254px;font-size:11px;color:#000;transform:scaleX(0.9992);">Templates</span>
<span class="t" style="left:66.7px;top:272px;font-size:11px;color:#000;transform:scaleX(1.0567);">Global</span>
<span class="t" style="left:66.7px;top:290px;font-size:11px;color:#000;transform:scaleX(1.0225);">Interfaces</span>
<span class="t" style="left:66.7px;top:308px;font-size:11px;color:#000;transform:scaleX(0.9555);">System A</span>
<span class="t" style="left:66.7px;top:326px;font-size:11px;color:#000;transform:scaleX(0.9389);">System B</span>
<span class="t" style="left:47.7px;top:344px;font-size:11px;color:#000;transform:scaleX(0.9987);">Static Messages</span>
<span class="t" style="left:47.7px;top:362px;font-size:11px;color:#000;transform:scaleX(1.0762);">Application Pool</span>
<span class="t" style="left:66.7px;top:380px;font-size:11px;color:#000;transform:scaleX(1.0686);">Applications</span>
<span class="t" style="left:66.7px;top:398px;font-size:11px;color:#000;transform:scaleX(1.0311);">Groups</span>
<span class="t" style="left:47.7px;top:416px;font-size:11px;color:#000;transform:scaleX(1.0684);">Network Pool</span>
<span class="t" style="left:47.7px;top:434px;font-size:11px;color:#000;transform:scaleX(1.0062);">E-mail Pool</span>
<span class="t" style="left:47.7px;top:452px;font-size:11px;color:#000;transform:scaleX(1.0886);">Attribute Pool</span>
<span class="t" style="left:260.5px;top:100px;font-size:18.5px;color:#000;transform:scaleX(0.9747);">Static Messages</span>
<span class="t" style="left:613.8px;top:143px;font-size:11px;color:#626262;transform:scaleX(1.0796);">Filter</span>
<span class="t" style="left:226px;top:172px;font-size:11px;color:#000;transform:scaleX(1.0100);">Reason</span>
<span class="t" style="left:377.8px;top:172px;font-size:11px;color:#000;transform:scaleX(1.0511);">Created at</span>
<span class="t" style="left:597.8px;top:172px;font-size:11px;color:#000;transform:scaleX(1.1168);">Modified at</span>
<span class="t" style="left:223px;top:195px;font-size:11px;color:#000;transform:scaleX(1.0851);">Microsoft Office Update</span>
<span class="t" style="left:373.5px;top:195px;font-size:11px;color:#000;transform:scaleX(1.0027);">Today 08:03</span>
<span class="t" style="left:593.5px;top:195px;font-size:11px;color:#000;transform:scaleX(1.0027);">Today 08:03</span>
<span class="t" style="left:832.6px;top:87px;font-size:11px;color:#000;font-weight:bold;transform:scaleX(0.9716);">Actions</span>
<span class="t" style="left:858.8px;top:114px;font-size:11px;color:#3399ff;transform:scaleX(1.0264);">Add new message...</span>
<span class="t" style="left:858.8px;top:143px;font-size:11px;color:#3399ff;transform:scaleX(1.0316);">Copy</span>
<span class="t" style="left:858.8px;top:165px;font-size:11px;color:#444;transform:scaleX(0.9772);">Paste</span>
<span class="t" style="left:858.8px;top:187px;font-size:11px;color:#3399ff;transform:scaleX(1.0311);">Edit...</span>
<span class="t" style="left:858.8px;top:209px;font-size:11px;color:#3399ff;transform:scaleX(0.9837);">Remove</span>
<span class="t" style="left:858.8px;top:231px;font-size:11px;color:#3399ff;transform:scaleX(1.0252);">Export...</span>
<span class="t" style="left:858.8px;top:253px;font-size:11px;color:#3399ff;transform:scaleX(1.0045);">Preview</span>
<span class="t" style="left:858.8px;top:282px;font-size:11px;color:#3399ff;transform:scaleX(1.0608);">Help</span>
<span class="t" style="left:858.8px;top:304px;font-size:11px;color:#3399ff;transform:scaleX(1.0807);">Watch the video-tutorials...</span>
<span class="t" style="left:832.6px;top:577px;font-size:11px;color:#000;font-weight:bold;transform:scaleX(1.0347);">Information</span>
<span class="t" style="left:857px;top:604px;font-size:12px;color:#161616;transform:scaleX(0.9688);">The message group <span style="color:#3399ff;text-decoration:underline">Default</span> contains</span>
<span class="t" style="left:857px;top:619px;font-size:12px;color:#161616;transform:scaleX(0.9703);">unpublished changes.</span>
<span class="t" style="left:5px;top:785px;font-size:12px;color:#727272;transform:scaleX(1.0288);">D:\IBI-aws\Admin\Data.xml</span>
</body></html>
